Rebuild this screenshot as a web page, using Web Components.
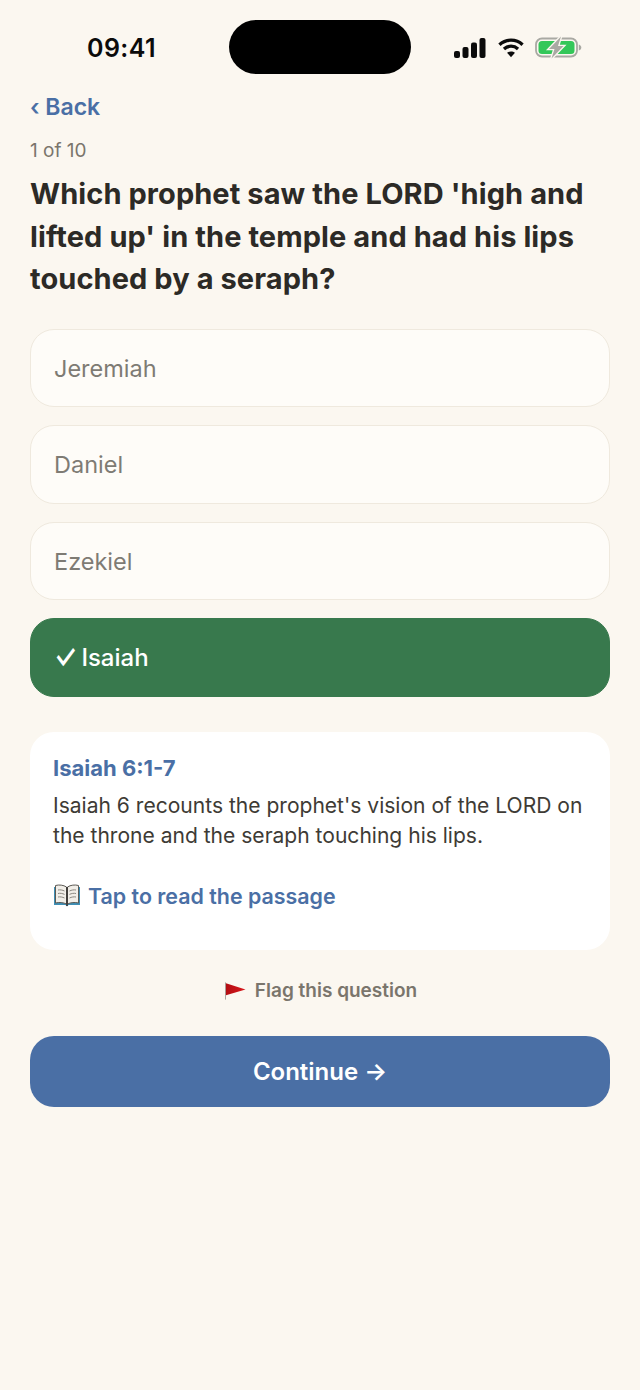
<!DOCTYPE html>
<html>
<head>
<meta charset="utf-8">
<title>Quiz</title>
<style>
    html, body { margin: 0; height: 100%; background: #FBF7F0; }
    body { font-family: Inter, "Liberation Sans", sans-serif; }
</style>
</head>
<body>
<quiz-screen>
    <status-bar></status-bar>
    <back-link>‹ Back</back-link>
    <quiz-progress>1 of 10</quiz-progress>
    <quiz-question>Which prophet saw the LORD 'high and lifted up' in the temple and had his lips touched by a seraph?</quiz-question>
    <answer-list>
        <answer-option>Jeremiah</answer-option>
        <answer-option>Daniel</answer-option>
        <answer-option>Ezekiel</answer-option>
        <answer-option correct><span class="tick">✓</span> Isaiah</answer-option>
    </answer-list>
    <explain-card reference="Isaiah 6:1-7">Isaiah 6 recounts the prophet's vision of the LORD on the throne and the seraph touching his lips.</explain-card>
    <flag-button>Flag this question</flag-button>
    <continue-button>Continue →</continue-button>
</quiz-screen>
<script>
function define(name, css, html) {
    customElements.define(name, class extends HTMLElement {
        constructor() {
            super();
            this.attachShadow({ mode: 'open' });
            const template = document.createElement('template');
            template.innerHTML = `<style>${css}</style>${html || '<slot></slot>'}`;
            this.shadowRoot.append(template.content.cloneNode(true));
        }
    });
}

define('quiz-screen', `
    :host { display: flex; flex-direction: column; box-sizing: border-box; width: 640px; min-height: 1390px; padding: 0 30px; background: #FBF7F0; color: #2C2A26; }
`);

define('status-bar', `
    :host { display: flex; align-items: center; height: 54px; margin: 20px -30px 0; position: relative; }
    .time { position: absolute; left: 87px; top: 12px; font: 600 25px/32px Inter, sans-serif; color: #0b0b0b; letter-spacing: 0.4px; }
    .island { position: absolute; left: 229px; top: 0; width: 182px; height: 54px; border-radius: 27px; background: #000; }
    .icons { position: absolute; left: 454px; top: 16px; display: flex; align-items: center; gap: 12px; }
    svg { display: block; }
`, `
    <span class="time">09:41</span>
    <div class="island"></div>
    <div class="icons">
        <svg width="32" height="21" viewBox="0 0 32 21" fill="#0b0b0b">
            <rect x="0" y="14" width="6" height="7" rx="2"/>
            <rect x="8.5" y="10" width="6" height="11" rx="2"/>
            <rect x="17" y="5.5" width="6" height="15.5" rx="2"/>
            <rect x="25.5" y="1" width="6" height="20" rx="2"/>
        </svg>
        <svg width="26" height="21" viewBox="0 0 27 21" fill="none" stroke="#0b0b0b" stroke-width="3.4">
            <path d="M1.5 7.6 C8 1.4 19 1.4 25.5 7.6"/>
            <path d="M6.2 12 C10.4 8.2 16.6 8.2 20.8 12"/>
            <path d="M13.5 20.5 L9.4 16 C11.6 14.2 15.4 14.2 17.6 16 Z" fill="#0b0b0b" stroke="none"/>
        </svg>
        <svg width="47" height="23" viewBox="0 0 47 23" style="margin-left:-1px">
            <rect x="1" y="2.5" width="41" height="18" rx="6" fill="none" stroke="#a9a9a3" stroke-width="1.8"/>
            <rect x="3.5" y="5" width="36" height="13" rx="3.5" fill="#34C759"/>
            <path d="M43.8 8.5 C45.3 9 46.3 10 46.3 11.5 C46.3 13 45.3 14 43.8 14.5 Z" fill="#a9a9a3"/>
            <path d="M26 0.5 L14 13 H19.5 L16.5 22.5 L28.5 10 H23 Z" fill="#a9a9a3" stroke="#FBF7F0" stroke-width="2.6" paint-order="stroke"/>
        </svg>
    </div>
`);

define('back-link', `
    :host { display: block; margin-top: 19px; font-size: 23px; line-height: 28px; font-weight: 600; color: #4A6FA5; }
`);

define('quiz-progress', `
    :host { display: block; margin-top: 17px; font-size: 19px; line-height: 26px; color: #7A756C; }
`);

define('quiz-question', `
    :host { display: block; margin-top: 9px; font-size: 29px; line-height: 42.5px; font-weight: 700; color: #2C2A26; letter-spacing: 0.08px; }
`);

define('answer-list', `
    :host { display: flex; flex-direction: column; gap: 18px; margin-top: 28px; }
`);

define('answer-option', `
    :host { display: block; box-sizing: border-box; height: 78.5px; padding: 0 23px; border: 1.5px solid #EFE9DE; border-radius: 24px; background: #FEFCF8; font-size: 23.5px; line-height: 77.5px; color: #7E7B74; }
    :host([correct]) { background: #38794D; border-color: #38794D; color: #fff; font-weight: 500; font-size: 24px; }
    ::slotted(.tick) { display: inline-block; margin-right: -2px; font-size: 26px; font-weight: 500; line-height: 1; transform: scaleY(1.35); }
`);

customElements.define('explain-card', class extends HTMLElement {
    constructor() {
        super();
        this.attachShadow({ mode: 'open' });
        this.shadowRoot.innerHTML = `
        <style>
            :host { display: block; box-sizing: border-box; height: 218px; margin-top: 35px; padding: 21px 23px; border-radius: 24px; background: #fff; }
            .ref { font-size: 22px; line-height: 30px; font-weight: 700; color: #4A6FA5; }
            .body { margin-top: 8px; font-size: 21.05px; line-height: 30px; color: #3E3B35; }
            .link { display: flex; align-items: center; gap: 7px; margin-top: 30px; font-size: 21.4px; line-height: 30px; font-weight: 600; color: #4A6FA5; }
            svg { display: block; flex: none; }
        </style>
        <div class="ref"></div>
        <div class="body"><slot></slot></div>
        <div class="link">
            <svg width="28" height="24" viewBox="0 0 28 24">
                <path d="M1 3 V21 H12.5 L14 22.5 L15.5 21 H27 V3 Z" fill="#3f8fb5"/>
                <path d="M2.5 1.5 C6 .5 10.5 1 13.5 3 V20 C10.5 18.5 6 18 2.5 19 Z" fill="#f1eee8" stroke="#5c5a55" stroke-width="1"/>
                <path d="M25.5 1.5 C22 .5 17.5 1 14.5 3 V20 C17.5 18.5 22 18 25.5 19 Z" fill="#f1eee8" stroke="#5c5a55" stroke-width="1"/>
                <path d="M5 6 C7 5.6 9.5 6 11.5 7 M5 9.5 C7 9 9.5 9.4 11.5 10.4 M5 13 C7 12.6 9.5 13 11.5 14 M23 6 C21 5.6 18.5 6 16.5 7 M23 9.5 C21 9 18.5 9.4 16.5 10.4 M23 13 C21 12.6 18.5 13 16.5 14" fill="none" stroke="#8a8780" stroke-width="1"/>
                <path d="M13.2 3 H14.8 V22 H13.2 Z" fill="#3a3835"/>
            </svg>
            <span>Tap to read the passage</span>
        </div>`;
    }

    connectedCallback() {
        this.shadowRoot.querySelector('.ref').textContent = this.getAttribute('reference');
    }
});

define('flag-button', `
    :host { display: flex; justify-content: center; align-items: center; gap: 9px; height: 28px; margin-top: 27px; padding-left: 2px; font-size: 19px; font-weight: 600; color: #7A756C; }
    svg { display: block; flex: none; }
`, `
    <svg width="21" height="18" viewBox="0 0 22 18">
        <defs><linearGradient id="f" x1="0" x2="1" y1="0" y2="0"><stop offset="0" stop-color="#b30d12"/><stop offset="1" stop-color="#d9191c"/></linearGradient></defs>
        <rect x="0" y="0" width="1" height="18" fill="#a5a29c"/>
        <path d="M1 1 L21.5 7.5 L1 13.5 Z" fill="url(#f)"/>
    </svg>
    <slot></slot>
`);

define('continue-button', `
    :host { display: flex; justify-content: center; align-items: center; height: 71px; margin-top: 31px; border-radius: 24px; background: #4A6FA5; color: #fff; font-size: 24px; font-weight: 600; }
`);
</script>
</body>
</html>
